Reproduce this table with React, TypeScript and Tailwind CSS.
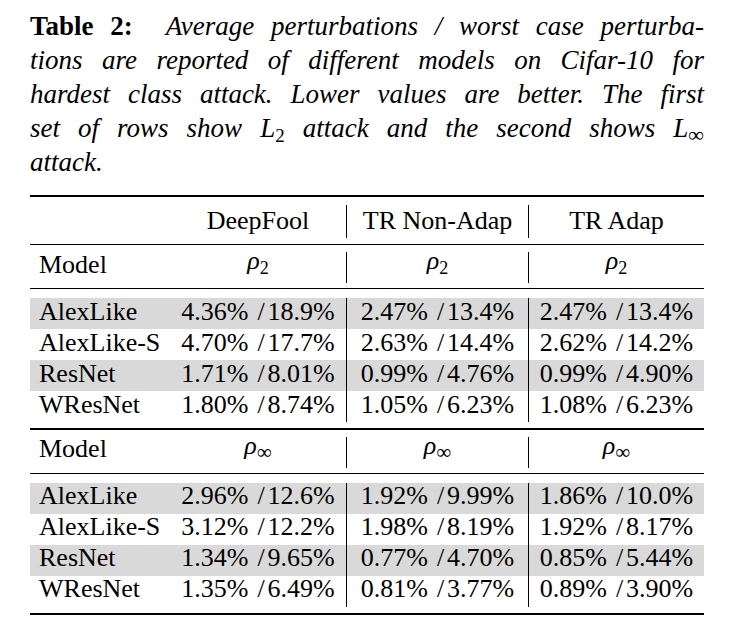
import React from "react";

type Pair = [string, string];

interface Row {
  model: string;
  cells: Pair[];
}

// L2 block
const L2_ROWS: Row[] = [
  { model: "AlexLike", cells: [["4.36%", "18.9%"], ["2.47%", "13.4%"], ["2.47%", "13.4%"]] },
  { model: "AlexLike-S", cells: [["4.70%", "17.7%"], ["2.63%", "14.4%"], ["2.62%", "14.2%"]] },
  { model: "ResNet", cells: [["1.71%", "8.01%"], ["0.99%", "4.76%"], ["0.99%", "4.90%"]] },
  { model: "WResNet", cells: [["1.80%", "8.74%"], ["1.05%", "6.23%"], ["1.08%", "6.23%"]] },
];

// L-inf block
const LINF_ROWS: Row[] = [
  { model: "AlexLike", cells: [["2.96%", "12.6%"], ["1.92%", "9.99%"], ["1.86%", "10.0%"]] },
  { model: "AlexLike-S", cells: [["3.12%", "12.2%"], ["1.98%", "8.19%"], ["1.92%", "8.17%"]] },
  { model: "ResNet", cells: [["1.34%", "9.65%"], ["0.77%", "4.70%"], ["0.85%", "5.44%"]] },
  { model: "WResNet", cells: [["1.35%", "6.49%"], ["0.81%", "3.77%"], ["0.89%", "3.90%"]] },
];

const COLS = [
  "w-[140px] pl-[9px] justify-start",
  "w-[176px] justify-center",
  "w-[182px] justify-center border-l border-black",
  "w-[176px] justify-center border-l border-black",
];

const LINE = "h-[34px] overflow-visible text-justify [text-align-last:justify] whitespace-nowrap";

function Rho({ sub }: { sub: "2" | "inf" }) {
  return (
    <span className="whitespace-nowrap">
      <span className="italic">ρ</span>
      {sub === "2" ? (
        <span className="text-[18px] align-[-5px]">2</span>
      ) : (
        <span className="text-[21px] align-[-5px]">∞</span>
      )}
    </span>
  );
}

function MathL({ sub }: { sub: "2" | "inf" }) {
  return (
    <span className="whitespace-nowrap">
      <span className="italic">L</span>
      {sub === "2" ? (
        <span className="not-italic text-[19px] align-[-5px]">2</span>
      ) : (
        <span className="not-italic text-[22px] align-[-5px]">∞</span>
      )}
    </span>
  );
}

function DataRow({ row, gray }: { row: Row; gray: boolean }) {
  return (
    <div className={`flex h-[31px] ${gray ? "bg-[#d9d9d9]" : ""}`}>
      <div className={`flex h-full items-center pb-[4px] ${COLS[0]}`}>{row.model}</div>
      {row.cells.map((c, i) => (
        <div key={i} className={`flex h-full items-center pb-[4px] ${COLS[i + 1]}`}>
          <span className="whitespace-nowrap">
            {c[0]}
            <span className="ml-[9px] mr-[3px]">/</span>
            {c[1]}
          </span>
        </div>
      ))}
    </div>
  );
}

function SubHeader({ sub }: { sub: "2" | "inf" }) {
  return (
    <div className="pt-[7px] pb-[5px]">
      <div className="flex h-[31px]">
        <div className={`flex h-full items-center pb-[6px] ${COLS[0]}`}>Model</div>
        {[1, 2, 3].map((i) => (
          <div key={i} className={`flex h-full items-center pb-[6px] ${COLS[i]}`}>
            <Rho sub={sub} />
          </div>
        ))}
      </div>
    </div>
  );
}

export default function App() {
  return (
    <div className="w-[740px] h-[639px] bg-white text-black pl-[30px] pr-[36px] font-['Liberation_Serif',serif]">
      {/* Caption */}
      <div className="pt-[9px] text-[27px] leading-[34px] italic">
        <div className={LINE}>
          <b className="not-italic font-bold">Table 2:</b>&nbsp; Average perturbations / worst case perturba-
        </div>
        <div className={LINE}>tions are reported of different models on Cifar-10 for</div>
        <div className={LINE}>hardest class attack. Lower values are better. The first</div>
        <div className={LINE}>
          set of rows show <MathL sub="2" /> attack and the second shows <MathL sub="inf" />
        </div>
        <div className="h-[34px]">attack.</div>
      </div>

      {/* Table */}
      <div className="mt-[16px] text-[26px] leading-[30px]">
        <div className="h-[2px] bg-black" />

        <div className="pt-[8px] pb-[6px]">
          <div className="flex h-[33px]">
            <div className={`flex h-full items-center pb-[2px] ${COLS[0]}`} />
            <div className={`flex h-full items-center pb-[2px] ${COLS[1]}`}>DeepFool</div>
            <div className={`flex h-full items-center pb-[2px] ${COLS[2]}`}>TR Non-Adap</div>
            <div className={`flex h-full items-center pb-[2px] ${COLS[3]}`}>TR Adap</div>
          </div>
        </div>
        <div className="h-px bg-black" />

        <SubHeader sub="2" />
        <div className="h-px bg-black" />

        <div className="pt-[9px] pb-[6px]">
          {L2_ROWS.map((r, i) => (
            <DataRow key={r.model} row={r} gray={i % 2 === 0} />
          ))}
        </div>
        <div className="h-[1.5px] bg-black" />

        <SubHeader sub="inf" />
        <div className="h-px bg-black" />

        <div className="pt-[9px] pb-[6px]">
          {LINF_ROWS.map((r, i) => (
            <DataRow key={r.model} row={r} gray={i % 2 === 0} />
          ))}
        </div>
        <div className="h-[2px] bg-black" />
      </div>
    </div>
  );
}
